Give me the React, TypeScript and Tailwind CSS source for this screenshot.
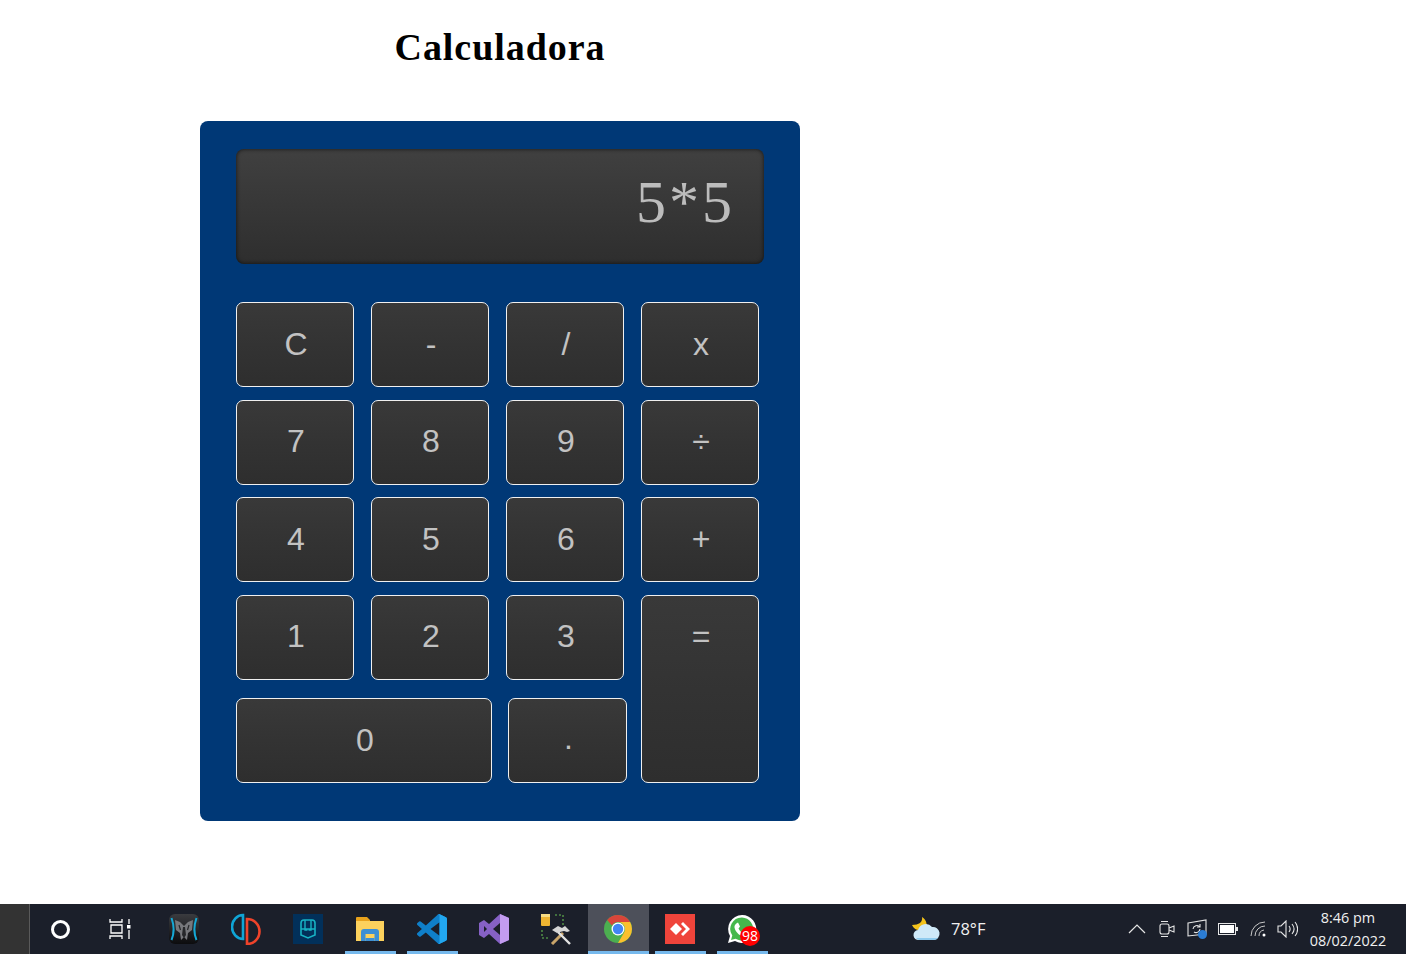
import React from 'react';

const keyClass =
    'flex justify-center shrink-0 h-[85px] pl-[2px] border border-[#f0f0f0] rounded-[7px] bg-gradient-to-b from-[#393939] via-[#333333] to-[#2e2e2e] text-[#c2c2c2] text-[32px] leading-8';

const Key = ({ label, className = 'w-[118px] pt-[24px]' }: { label: string; className?: string }) => (
    <button className={`${keyClass} ${className}`}>{label}</button>
);

const Row = ({ labels, className, keyClassName }: { labels: string[]; className: string; keyClassName: string }) => (
    <div className={`flex gap-[17px] ${className}`}>
        {labels.map((label) => (
            <Key key={label} label={label} className={keyClassName} />
        ))}
    </div>
);

const Slot = ({ children, active, underline, className = '' }: { children: React.ReactNode; active?: boolean; underline?: string; className?: string }) => (
    <div className={`relative flex items-center justify-center w-[62px] h-full ${className}`}>
        {active && <span className="absolute inset-y-0 left-[1px] right-0 bg-[#4d505a]" />}
        <div className="relative flex">{children}</div>
        {underline && <span className={`absolute bottom-0 h-[3px] bg-[#76b9ed] ${underline}`} />}
    </div>
);

const TaskView = () => (
    <svg width="24" height="22" viewBox="0 0 24 22" fill="none" stroke="#fff" strokeWidth="1.3" className="mr-[3px]">
        <path d="M1 1v3h12V1M1 21v-3h12v3M2 7h11v8H2zM20 1v5M20 12v9" />
        <rect x="18" y="7" width="3.5" height="3.5" fill="#fff" stroke="none" />
    </svg>
);

const Predator = () => (
    <svg width="32" height="32" viewBox="0 0 32 32">
        <defs>
            <linearGradient id="predatorBg" x1="0" y1="0" x2="0" y2="1">
                <stop offset="0" stopColor="#3a3b3f" />
                <stop offset="1" stopColor="#0c0c0e" />
            </linearGradient>
        </defs>
        <rect x="1" y="1" width="30" height="30" rx="6" fill="url(#predatorBg)" />
        <path d="M3.500 5c2.500 7 2.500 16 0 22" stroke="#15a9d6" strokeWidth="2" fill="none" />
        <path d="M28.500 5c-2.500 7-2.500 16 0 22" stroke="#15a9d6" strokeWidth="2" fill="none" />
        <path d="M7 7l5 2 4 4 4-4 5-2-1 10-4 3-1 7-3-3-3 3-1-7-4-3z" fill="#77787c" />
        <path d="M15 14l-1 8 2 3 2-3-1-8z" fill="#26272a" />
        <path d="M11 12l1.500 5M21 12l-1.500 5" stroke="#26272a" strokeWidth="1.200" />
    </svg>
);

const Yuzu = () => (
    <svg width="30" height="32" viewBox="0 0 30 32" fill="none" strokeWidth="2.6">
        <path d="M12 2a11 12 0 0 0 0 24z" stroke="#0fa5d6" />
        <path d="M16 6a12 12 0 0 1 0 25z" stroke="#f0432a" />
    </svg>
);

const Shield = () => (
    <svg width="30" height="30" viewBox="0 0 30 30" fill="none">
        <rect width="30" height="30" fill="#02305a" />
        <path d="M8 9a3 3 0 0 1 3-3h8a3 3 0 0 1 3 3v12l-7 3-7-3z" stroke="#17b3c4" strokeWidth="1.600" />
        <path d="M12 6v10h2.500M18 6v10h-2.500M8 15h14" stroke="#17b3c4" strokeWidth="1.400" />
    </svg>
);

const Explorer = () => (
    <svg width="28" height="28" viewBox="0 0 28 28">
        <path d="M0 3a1 1 0 0 1 1-1h10l3 3v2H0z" fill="#e8a21c" />
        <rect x="0" y="6" width="28" height="20" fill="#fcd15d" />
        <path d="M5 26V17a3 3 0 0 1 3-3h12a3 3 0 0 1 3 3v9h-4.500v-7h-9v7z" fill="#3c8fd4" />
        <rect x="9.500" y="23" width="9" height="3" fill="#3c8fd4" />
    </svg>
);

const VSCode = () => (
    <svg width="30" height="30" viewBox="0 0 100 100">
        <path
            d="M96.500 10.800 75.900.9a6.200 6.200 0 0 0-7.100 1.200L29.400 38 12.200 25a4.200 4.200 0 0 0-5.300.2l-5.500 5a4.200 4.200 0 0 0 0 6.200L16.300 50 1.400 63.600a4.200 4.200 0 0 0 0 6.200l5.500 5a4.200 4.200 0 0 0 5.300.2l17.200-13 39.400 35.900a6.200 6.200 0 0 0 7.100 1.200l20.600-9.900a6.200 6.200 0 0 0 3.500-5.600V16.400a6.200 6.200 0 0 0-3.500-5.600zM75 72.700 45.100 50 75 27.300z"
            fill="#0f7fc9"
        />
        <path
            d="M75.900 99.100a6.200 6.200 0 0 1-7.100-1.200C71 100.200 75 98.600 75 95.300V4.700c0-3.300-4-4.900-6.200-2.600a6.200 6.200 0 0 1 7.100-1.200l20.600 9.900a6.200 6.200 0 0 1 3.500 5.600v67.200a6.200 6.200 0 0 1-3.500 5.600z"
            fill="#22a7f0"
        />
    </svg>
);

const VisualStudio = () => (
    <svg width="30" height="30" viewBox="0 0 30 30">
        <path d="M21 0l9 4v22l-9 4-11-10-5 4-5-3V9l5-3 5 4z" fill="#8661c5" />
        <path d="M21 0l9 4v22l-9 4z" fill="#c39cf0" />
        <path d="M21 9l-7 6 7 6z" fill="#1b1f2a" />
        <path d="M5 12v6l3-3z" fill="#1b1f2a" />
    </svg>
);

const Tools = () => (
    <svg width="30" height="32" viewBox="0 0 30 32" fill="none">
        <rect x="0" y="1" width="9" height="12" rx="1" fill="#eeb432" />
        <rect x="0" y="1" width="9" height="3" fill="#f7dc84" />
        <path d="M14 2h8v10M1 17v8h8" stroke="#4f8a45" strokeWidth="1.600" strokeDasharray="2 2" />
        <path d="M11 31l11-11" stroke="#c9a56a" strokeWidth="3" />
        <path d="M29 31L17 19" stroke="#e3e3e3" strokeWidth="2.400" />
        <path d="M11 17l6-4 4 2 3-2 5 5-3 1-3-1-4 1-3 1z" fill="#d6d6d6" />
    </svg>
);

const Chrome = () => (
    <svg width="28" height="28" viewBox="0 0 28 28">
        <circle cx="14" cy="14" r="14" fill="#4caf50" />
        <path d="M14 0a14 14 0 0 1 12.100 7H14a7 7 0 0 0-6.100 3.500L3.200 5A14 14 0 0 1 14 0z" fill="#d9453a" />
        <path d="M26.100 7A14 14 0 0 1 14 28l6.100-10.500A7 7 0 0 0 20 10.500 7 7 0 0 0 14 7z" fill="#fbc02d" />
        <circle cx="14" cy="14" r="6.500" fill="#fff" />
        <circle cx="14" cy="14" r="5.200" fill="#4285f4" />
    </svg>
);

const AnyDesk = () => (
    <svg width="30" height="30" viewBox="0 0 30 30">
        <rect width="30" height="30" fill="#ef443b" />
        <path d="M11 9l6 6-6 6-6-6z" fill="#fff" />
        <path d="M18 8l7 7-7 7-2-2 5-5-5-5z" fill="#fff" />
    </svg>
);

const WhatsApp = () => (
    <div className="relative w-[30px] h-[30px]">
        <svg width="30" height="30" viewBox="0 0 30 30">
            <path d="M15 1a14 14 0 0 0-12 21L1 29l7-2A14 14 0 1 0 15 1z" fill="#fff" />
            <path d="M15 3.500A11.500 11.500 0 0 0 5.300 21.500L4 26l4.600-1.200A11.500 11.500 0 1 0 15 3.500z" fill="#45b84c" />
            <path d="M11 8.500l2 4-1.500 2c1 2 2.500 3.500 4.500 4.500l2-1.500 3.500 2c-.5 2.500-3 3.500-5 3-4.500-1-8-4.500-9-9-.3-2 1-4 3.500-5z" fill="#fff" />
        </svg>
        <span className="absolute left-[13px] top-[12px] flex items-center justify-center w-[20px] h-[20px] rounded-full bg-[#ff0000] text-white text-[14px] leading-none">
            98
        </span>
    </div>
);

const Weather = () => (
    <svg width="30" height="26" viewBox="0 0 30 26">
        <path d="M11 1c1 5-3 8-10 8 2 5 8 7 13 4 3-2 2-9-3-12z" fill="#f3c21b" />
        <path d="M8 24a5 5 0 0 1-1-10 8 8 0 0 1 14-3 6.500 6.500 0 0 1 2 13z" fill="#cfe9f8" />
        <path d="M8 24a5 5 0 0 1-3-2h22a6 6 0 0 1-4 2z" fill="#8fcbee" />
    </svg>
);

const Tray = () => (
    <div className="flex items-center ml-auto">
        <svg width="18" height="10" viewBox="0 0 18 10" fill="none" stroke="#e6e6e6" strokeWidth="1.200" className="mr-[13px]">
            <path d="M1 9l8-8 8 8" />
        </svg>
        <svg width="16" height="18" viewBox="0 0 16 18" fill="none" stroke="#e6e6e6" strokeWidth="1.100" className="mr-[12px]">
            <rect x="1" y="4" width="9" height="10" rx="2" />
            <path d="M10 8l5-2v6l-5-2M2 1.500h7M2 16.500h7" />
        </svg>
        <div className="relative mr-[11px] w-[20px] h-[20px]">
            <svg width="20" height="20" viewBox="0 0 20 20" fill="none" stroke="#e6e6e6" strokeWidth="1.100">
                <path d="M1 4l18-3v14l-18 2zM6 10a4 4 0 0 1 7-2M13 5v3h-3M13 10a4 4 0 0 1-6 3" />
            </svg>
            <span className="absolute left-[11px] top-[11px] w-[9px] h-[9px] rounded-full bg-[#2b7cd3]" />
        </div>
        <svg width="20" height="12" viewBox="0 0 20 12" className="mr-[12px]">
            <rect x="0.500" y="0.500" width="17" height="11" fill="none" stroke="#e6e6e6" />
            <rect x="2" y="2" width="14" height="8" fill="#fff" />
            <rect x="18" y="4" width="2" height="4" fill="#e6e6e6" />
        </svg>
        <svg width="17" height="16" viewBox="0 0 17 16" fill="none" stroke="#c8c8c8" strokeWidth="1" className="mr-[10px]">
            <path d="M1 15a14 14 0 0 1 14-14M5 15a10 10 0 0 1 10-10M9 15a6 6 0 0 1 5-6" />
            <circle cx="14" cy="14" r="1.500" fill="#fff" stroke="none" />
        </svg>
        <svg width="21" height="18" viewBox="0 0 21 18" fill="none" stroke="#e6e6e6" strokeWidth="1.100" className="mr-[11px]">
            <path d="M1 6h3l5-5v16l-5-5H1zM12 6c1.500 2 1.500 4 0 6M15 4c2.500 3 2.500 7 0 10M18 2c3.500 4 3.500 10 0 14" />
        </svg>
        <div className="flex flex-col items-center w-[78px] mr-[19px] text-[14.400px] leading-[23px] text-[#f0f0f0]">
            <span>8:46 pm</span>
            <span>08/02/2022</span>
        </div>
    </div>
);

const App = () => {
    return (
        <div className="flex flex-col w-[1406px] h-[954px] bg-white overflow-hidden font-['Open_Sans',sans-serif]">
            <main className="flex-1 w-[600px] ml-[200px] font-['Liberation_Sans',Arial,sans-serif]">
                <h1 className="h-[121px] pt-[23px] text-center text-[38px] leading-[48px] font-bold text-black font-['Liberation_Serif',serif] tracking-[0.95px]">
                    Calculadora
                </h1>

                <div className="h-[700px] px-[36px] pt-[28px] rounded-lg bg-[#003876]">
                    <div className="flex justify-end items-center h-[115px] pb-[10px] pr-[29px] rounded-lg bg-gradient-to-b from-[#404040] to-[#2e2e2e] shadow-[inset_0_0_4px_rgba(0,0,0,0.7)] text-[60px] tracking-[3px] text-[#bcbcbc] font-['Liberation_Serif',serif]">
                        5*5
                    </div>

                    <Row labels={['C', '-', '/', 'x']} className="mt-[38px]" keyClassName="w-[118px] pt-[25px]" />
                    <Row labels={['7', '8', '9', '÷']} className="mt-[13px]" keyClassName="w-[118px] pt-[24px]" />
                    <Row labels={['4', '5', '6', '+']} className="mt-[12px]" keyClassName="w-[118px] pt-[25px]" />

                    <div className="flex gap-[17px] mt-[13px]">
                        <div className="w-[388px]">
                            <Row labels={['1', '2', '3']} className="" keyClassName="w-[118px] pt-[24px]" />
                            <div className="flex gap-[16px] mt-[18px]">
                                <Key label="0" className="w-[256px] pt-[25px]" />
                                <Key label="." className="w-[119px] pt-[23px]" />
                            </div>
                        </div>
                        <Key label="=" className="w-[118px] !h-[188px] pt-[24px]" />
                    </div>
                </div>
            </main>

            <footer className="flex items-center h-[50px] bg-[#1b1f2a]">
                <div className="w-[30px] h-full bg-[#333333] border-r border-[#5a5a5a]" />
                <Slot className="-ml-[1px]">
                    <span className="w-[19px] h-[19px] rounded-full border-[3px] border-white" />
                </Slot>
                <Slot><TaskView /></Slot>
                <Slot><Predator /></Slot>
                <Slot><Yuzu /></Slot>
                <Slot><Shield /></Slot>
                <Slot underline="left-[6px] w-[51px]">
                    <Explorer />
                </Slot>
                <Slot underline="left-[6px] w-[51px]"><VSCode /></Slot>
                <Slot><VisualStudio /></Slot>
                <Slot><Tools /></Slot>
                <Slot active underline="left-[1px] w-[61px]"><Chrome /></Slot>
                <Slot underline="left-[6px] w-[51px]"><AnyDesk /></Slot>
                <Slot underline="left-[6px] w-[51px]"><WhatsApp /></Slot>

                <div className="flex items-center gap-[10px] ml-[138px] text-[16.500px] text-[#f0f0f0]">
                    <Weather />
                    <span className="pt-[1px]">78°F</span>
                </div>

                <Tray />
            </footer>
        </div>
    );
};

export default App;
